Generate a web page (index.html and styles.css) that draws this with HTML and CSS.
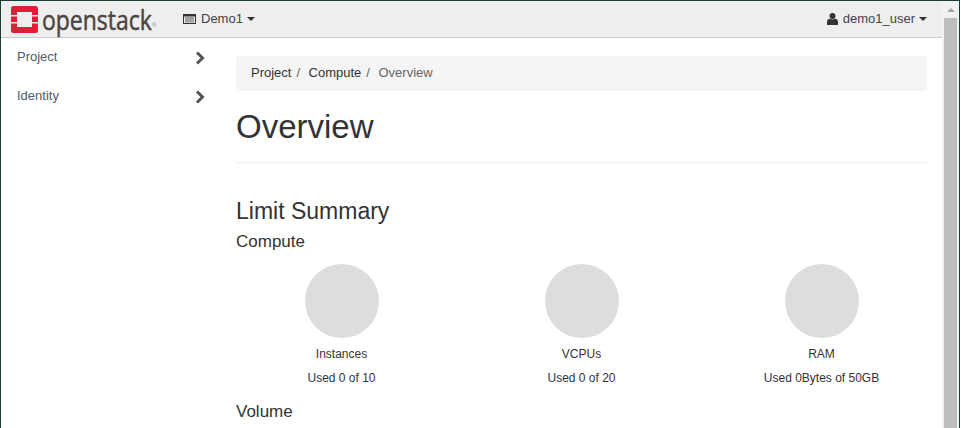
FILE: index.html
```html
<!DOCTYPE html>
<html lang="en">
<head>
<meta charset="utf-8">
<title>Overview</title>
<link rel="stylesheet" href="styles.css">
</head>
<body>
<div class="window">
  <div class="page">
    <header class="navbar">
      <a class="brand">
        <svg class="logo" width="27" height="27" viewBox="0 0 27 27"><path fill="#e41c37" d="M2.500 0h22A2.500 2.500 0 0 1 27 2.500V9h-6V6H6v3H0V2.500A2.500 2.500 0 0 1 2.500 0zM0 10.500h6V16H0zM21 10.500h6V16h-6zM0 17.500h6V21h15v-3.500h6v7a2.500 2.500 0 0 1-2.500 2.500h-22A2.500 2.500 0 0 1 0 24.500z"/></svg>
        <span class="wordmark">openstack</span><span class="reg">®</span>
      </a>
      <a class="project">
        <svg class="server" width="13" height="10" viewBox="0 0 13 10"><path fill="#333" fill-rule="evenodd" d="M0 0h13v10H0zM1 2.500V9h11V2.500z"/><path fill="#555" d="M2 3.500h9v1H2zM2 5.500h9v1H2zM2 7.500h9v.8H2z"/></svg>
        <span>Demo1</span><i class="caret"></i>
      </a>
      <a class="user">
        <svg width="11" height="12" viewBox="0 0 11 12"><circle cx="5.500" cy="3" r="3" fill="#333"/><path fill="#333" d="M0 12V9q0-3 3-3.200 2.500 1.500 5 0Q11 6 11 9v3z"/></svg>
        <span>demo1_user</span><i class="caret"></i>
      </a>
    </header>
    <div class="body">
      <nav class="sidebar">
        <a class="side-item"><span>Project</span><svg width="10" height="14" viewBox="0 0 10 14"><path fill="none" stroke="#555" stroke-width="3" d="M2 1.500 7.500 7 2 12.500"/></svg></a>
        <a class="side-item"><span>Identity</span><svg width="10" height="14" viewBox="0 0 10 14"><path fill="none" stroke="#555" stroke-width="3" d="M2 1.500 7.500 7 2 12.500"/></svg></a>
      </nav>
      <main class="main">
        <ol class="crumbs">
          <li>Project<span class="sep">/</span></li>
          <li>Compute<span class="sep">/</span></li>
          <li class="active">Overview</li>
        </ol>
        <h1>Overview</h1>
        <h2>Limit Summary</h2>
        <h3>Compute</h3>
        <div class="pies">
          <div class="pie"><div class="disc"></div><div class="name">Instances</div><div class="used">Used 0 of 10</div></div>
          <div class="pie"><div class="disc"></div><div class="name">VCPUs</div><div class="used">Used 0 of 20</div></div>
          <div class="pie"><div class="disc"></div><div class="name">RAM</div><div class="used">Used 0Bytes of 50GB</div></div>
        </div>
        <h3 class="volume">Volume</h3>
      </main>
    </div>
  </div>
  <div class="scrollbar">
    <i class="arrow"></i>
    <div class="thumb"></div>
  </div>
</div>
</body>
</html>
```
FILE: styles.css
```css
* { box-sizing: border-box; }
html, body { margin: 0; height: 100%; overflow: hidden; background: #fff; }
body { font: 12px/1.43 "Liberation Sans", Arial, sans-serif; color: #333; }
.window { display: flex; width: 960px; height: 428px; border: 1px solid #1d3b3c; border-bottom: 0; }
.page { flex: 1; min-width: 0; display: flex; flex-direction: column; }
.navbar { display: flex; align-items: center; height: 37px; flex: none; background: #eee; border-bottom: 1px solid #ccc; padding-left: 10px; padding-right: 15px; }
.brand { display: flex; align-items: center; width: 172px; }
.logo { flex: none; margin-top: 1px; }
.wordmark { display: inline-block; font: 28px/27px "Open Sans", sans-serif; color: #4a4542; margin-left: 4px; margin-right: -24px; transform: scaleX(.82); transform-origin: left center; -webkit-text-stroke: .5px #4a4542; }
.reg { font: 6px "Liberation Sans", sans-serif; color: #888; align-self: flex-end; margin-bottom: 5px; }
.project, .user { display: flex; align-items: center; font-size: 13px; color: #444; }
.project span { margin-left: 5px; }
.user { margin-left: auto; }
.user span { margin-left: 5px; }
.caret { width: 0; height: 0; border: 4px solid transparent; border-top-color: #333; border-bottom: 0; margin-left: 4px; }
.body { flex: 1; display: flex; min-height: 0; }
.sidebar { width: 220px; flex: none; }
.side-item { display: flex; justify-content: space-between; align-items: center; height: 39px; padding: 0 16px; font-size: 13px; color: #4d5b6d; }
.main { flex: 1; min-width: 0; padding: 18px 15px 0; }
.crumbs { list-style: none; display: flex; margin: 0; padding: 0 15px; height: 35px; align-items: center; background: #f5f5f5; border-radius: 4px; font-size: 13px; }
.crumbs .sep { color: #666; padding: 0 5px; margin-right: 3.5px; }
.crumbs .active { color: #666; }
h1 { margin: 16px 0 0; font-size: 33px; font-weight: 400; line-height: 40px; padding-bottom: 15px; border-bottom: 1px solid #eee; }
h2 { margin: 35px 0 0; font-size: 23px; font-weight: 400; line-height: 26px; }
h3 { margin: 8px 0 0; font-size: 17px; font-weight: 400; line-height: 20px; }
.pies { display: flex; margin: 12px -15px 0 -14.500px; }
.pie { width: 240px; text-align: center; }
.disc { width: 74px; height: 74px; border-radius: 50%; background: #ddd; margin: 0 auto 8px; }
.name { line-height: 17px; margin-bottom: 7px; }
.used { line-height: 17px; }
h3.volume { margin-top: 15px; }
.scrollbar { width: 17px; flex: none; background: #f1f1f1; display: flex; flex-direction: column; align-items: center; }
.arrow { width: 0; height: 0; border: 4px solid transparent; border-bottom-color: #a3a3a3; border-top: 0; margin-top: 7px; margin-bottom: 6px; }
.thumb { width: 13px; flex: 1; background: #bdbdbd; }
```
